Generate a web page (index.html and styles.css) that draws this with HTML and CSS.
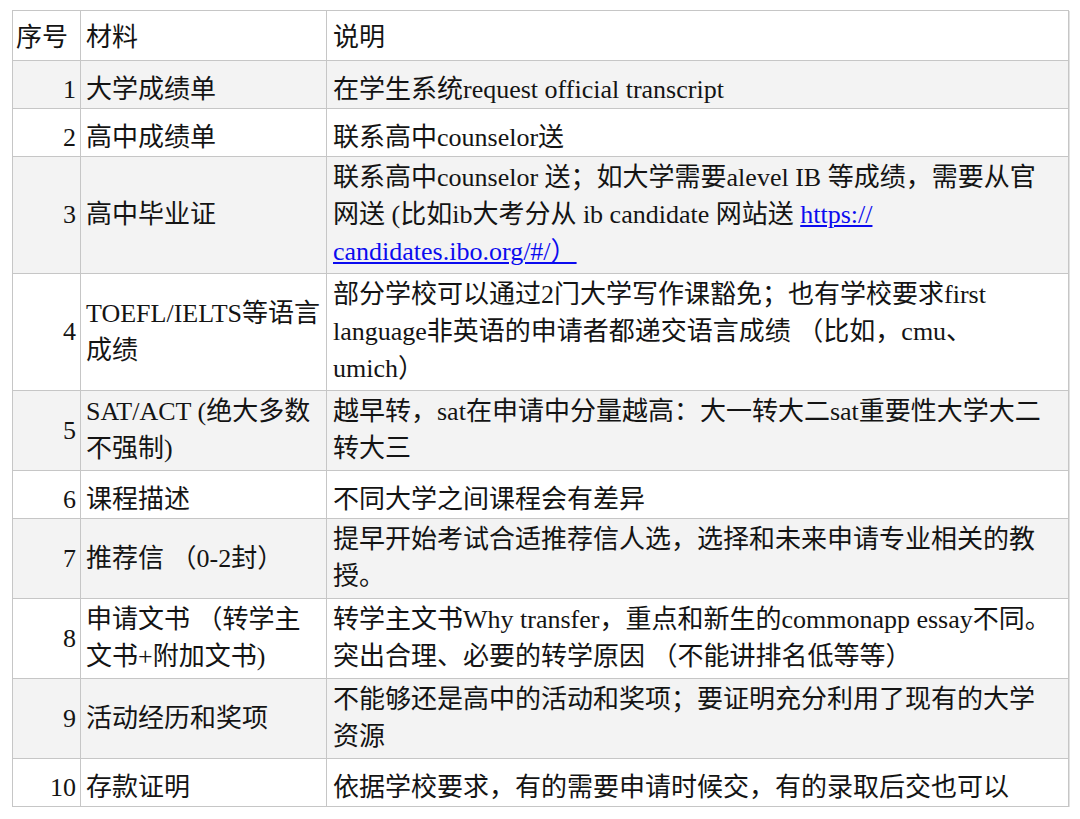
FILE: index.html
```html
<!DOCTYPE html>
<html lang="zh-CN">
<head>
<meta charset="utf-8">
<title>转学材料</title>
<link rel="stylesheet" href="styles.css">
</head>
<body>
<div class="page">
<table class="tbl">
  <colgroup>
    <col class="c1"><col class="c2"><col class="c3">
  </colgroup>
  <tr class="head single">
    <td class="num-h">序号</td><td>材料</td><td>说明</td>
  </tr>
  <tr class="odd single">
    <td class="num">1</td><td>大学成绩单</td><td>在学生系统request official transcript</td>
  </tr>
  <tr class="single">
    <td class="num">2</td><td>高中成绩单</td><td>联系高中counselor送</td>
  </tr>
  <tr class="odd">
    <td class="num">3</td><td>高中毕业证</td><td>联系高中counselor 送；如大学需要alevel IB 等成绩，需要从官网送 (比如ib大考分从 ib candidate 网站送 <a href="#">https://<wbr>candidates.ibo.org/#/）</a></td>
  </tr>
  <tr>
    <td class="num">4</td><td>TOEFL/IELTS等语言成绩</td><td>部分学校可以通过2门大学写作课豁免；也有学校要求first language非英语的申请者都递交语言成绩 （比如，cmu、umich）</td>
  </tr>
  <tr class="odd">
    <td class="num">5</td><td>SAT/ACT (绝大多数不强制)</td><td>越早转，sat在申请中分量越高：大一转大二sat重要性大学大二转大三</td>
  </tr>
  <tr class="single">
    <td class="num">6</td><td>课程描述</td><td>不同大学之间课程会有差异</td>
  </tr>
  <tr class="odd">
    <td class="num">7</td><td>推荐信 （0-2封）</td><td>提早开始考试合适推荐信人选，选择和未来申请专业相关的教授。</td>
  </tr>
  <tr>
    <td class="num">8</td><td>申请文书 （转学主文书+附加文书)</td><td>转学主文书Why transfer，重点和新生的commonapp essay不同。突出合理、必要的转学原因 （不能讲排名低等等）</td>
  </tr>
  <tr class="odd">
    <td class="num">9</td><td>活动经历和奖项</td><td>不能够还是高中的活动和奖项；要证明充分利用了现有的大学资源</td>
  </tr>
  <tr class="single">
    <td class="num">10</td><td>存款证明</td><td>依据学校要求，有的需要申请时候交，有的录取后交也可以</td>
  </tr>
</table>
</div>
</body>
</html>
```

FILE: styles.css
```css
html, body {
  margin: 0;
  padding: 0;
  background: #ffffff;
}
.page {
  padding: 10px 0 0 12px;
}
.tbl {
  border-collapse: collapse;
  table-layout: fixed;
  width: 1056px;
  font-family: "Liberation Serif", "Noto Sans CJK SC", serif;
  font-size: 26px;
  line-height: 37px;
  color: #141414;
  text-spacing-trim: space-all;
  box-shadow: 1px 1px 0 #e2e2e2;
}
.c1 { width: 68px; }
.c2 { width: 246px; }
.c3 { width: 742px; }
.tbl td {
  border: 1px solid #c6c6c6;
  padding: 2px 1px 3px 5px;
  vertical-align: middle;
  text-align: left;
}
.tbl td:nth-child(3) {
  padding: 2px 14px 3px 6px;
}
.tbl tr.single td {
  padding-top: 10px;
  padding-bottom: 0;
}
.tbl tr.head td {
  padding-top: 8px;
  padding-bottom: 4px;
}
.tbl td.num {
  text-align: right;
  padding-right: 4px;
  padding-left: 2px;
}
.tbl td.num-h {
  padding-left: 3px;
  padding-right: 2px;
}
.odd {
  background: #f3f3f3;
}
a {
  color: #0b0bef;
  text-decoration: underline;
}
```
